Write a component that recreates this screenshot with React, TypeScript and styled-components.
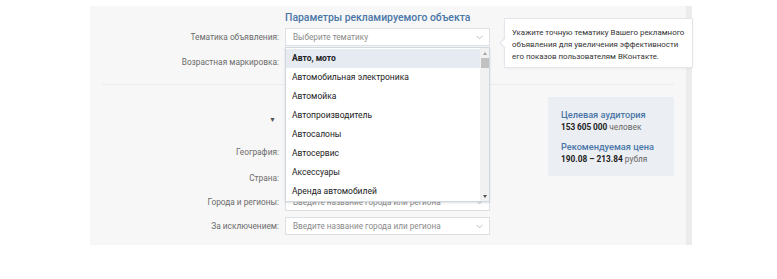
import React from 'react';
import styled, { createGlobalStyle } from 'styled-components';

const GlobalStyle = createGlobalStyle`
  body {
    margin: 0;
    background: #fff;
    font-family: Roboto, "Noto Sans", Arial, sans-serif;
  }
`;

const Page = styled.div`
  display: flex;
  padding: 6px 0 0 90px;
`;

const Panel = styled.div`
  position: relative;
  width: 596px;
  height: 239px;
  box-sizing: border-box;
  padding: 4px 12px 0;
  background: #f7f7f7;
  display: flex;
  flex-direction: column;
`;

const Strip = styled.div`
  width: 6px;
  height: 239px;
  background: #ececec;
`;

const Row = styled.div<{ $h?: number; $mt?: number }>`
  display: grid;
  grid-template-columns: 177px 205px;
  column-gap: 6px;
  align-items: center;
  height: ${(p) => p.$h ?? 18}px;
  margin-top: ${(p) => p.$mt ?? 0}px;
`;

const Label = styled.div`
  text-align: right;
  font-size: 8.3px;
  color: #6b6b6b;
  white-space: nowrap;
`;

const Title = styled.div`
  font-size: 10.4px;
  font-weight: 500;
  color: #4a76a8;
  white-space: nowrap;
`;

const SelectWrap = styled.div`
  position: relative;
  height: 18px;
`;

const Select = styled.div`
  box-sizing: border-box;
  height: 18px;
  padding: 0 6px 0 7px;
  display: flex;
  align-items: center;
  justify-content: space-between;
  background: #fff;
  border: 1px solid #dce1e6;
  font-size: 8.2px;
  color: #8a8a8a;
  white-space: nowrap;
`;

const Chevron = () => (
  <svg width="7" height="5" viewBox="0 0 7 5">
    <polyline points="0.5,0.8 3.5,3.8 6.5,0.8" fill="none" stroke="#b8c1cb" strokeWidth="1" />
  </svg>
);

const Dropdown = styled.div`
  position: absolute;
  z-index: 2;
  top: 19px;
  left: 0;
  width: 205px;
  height: 155px;
  box-sizing: border-box;
  display: flex;
  background: #fff;
  border: 1px solid #d0d7de;
  box-shadow: 0 1px 2px rgba(0, 0, 0, 0.12);
`;

const Items = styled.div`
  flex: 1;
  padding-top: 1px;
  overflow: hidden;
`;

const Item = styled.div<{ $active?: boolean }>`
  height: 19px;
  line-height: 18px;
  padding-left: 6px;
  font-size: 8.5px;
  color: #222;
  white-space: nowrap;
  background: ${(p) => (p.$active ? '#e5ebf1' : 'transparent')};
  font-weight: ${(p) => (p.$active ? 700 : 400)};
`;

const Scrollbar = styled.div`
  width: 9px;
  background: #f1f1f1;
  display: flex;
  flex-direction: column;
  align-items: center;
  padding: 4px 0 3px;
`;

const Arrow = styled.div<{ $down?: boolean }>`
  width: 0;
  height: 0;
  border-left: 2.5px solid transparent;
  border-right: 2.5px solid transparent;
  ${(p) => (p.$down ? 'border-top: 3px solid #505050;' : 'border-bottom: 3px solid #a3a3a3;')}
`;

const Thumb = styled.div`
  width: 8px;
  height: 10px;
  margin-top: 3px;
  background: #c1c1c1;
`;

const Spacer = styled.div`
  flex: 1;
`;

const Tooltip = styled.div`
  position: absolute;
  z-index: 3;
  left: 415px;
  top: 13px;
  width: 187px;
  box-sizing: border-box;
  padding: 8px 4px 4px 7px;
  background: #fff;
  box-shadow: 0 0 0 1px #e3e6ea, 0 1px 3px rgba(0, 0, 0, 0.08);
  font-size: 7.9px;
  line-height: 12px;
  color: #333;
  white-space: nowrap;

  &::before {
    content: '';
    position: absolute;
    left: -4px;
    top: 20px;
    width: 7px;
    height: 7px;
    background: #fff;
    border-left: 1px solid #dfe3e8;
    border-bottom: 1px solid #dfe3e8;
    transform: rotate(45deg);
  }
`;

const Separator = styled.div`
  height: 1px;
  margin-top: 13px;
  background: #ebebeb;
`;

const Lower = styled.div`
  display: flex;
  justify-content: space-between;
`;

const Form = styled.div`
  display: flex;
  flex-direction: column;
`;

const Toggle = styled.span`
  font-size: 7px;
  color: #555;
  margin-right: 3px;
`;

const Audience = styled.div`
  width: 126px;
  height: 79px;
  margin-top: 12px;
  box-sizing: border-box;
  padding: 11px 13px;
  background: #ebeef2;
`;

const StatTitle = styled.div<{ $mt?: number }>`
  font-size: 9.2px;
  font-weight: 500;
  line-height: 13px;
  color: #4a76a8;
  margin-top: ${(p) => p.$mt ?? 0}px;
  white-space: nowrap;
`;

const StatValue = styled.div`
  font-size: 8.3px;
  line-height: 13px;
  color: #666;
  white-space: nowrap;

  b {
    color: #222;
    font-weight: 700;
  }
`;

const topics = [
  'Авто, мото',
  'Автомобильная электроника',
  'Автомойка',
  'Автопроизводитель',
  'Автосалоны',
  'Автосервис',
  'Аксессуары',
  'Аренда автомобилей',
];

export default function App() {
  return (
    <>
      <GlobalStyle />
      <Page>
        <Panel>
          <Row $h={14}>
            <span />
            <Title>Параметры рекламируемого объекта</Title>
          </Row>
          <Row $mt={4}>
            <Label>Тематика объявления:</Label>
            <SelectWrap>
              <Select>
                Выберите тематику
                <Chevron />
              </Select>
              <Dropdown>
                <Items>
                  {topics.map((t, i) => (
                    <Item key={t} $active={i === 0}>
                      {t}
                    </Item>
                  ))}
                </Items>
                <Scrollbar>
                  <Arrow />
                  <Thumb />
                  <Spacer />
                  <Arrow $down />
                </Scrollbar>
              </Dropdown>
            </SelectWrap>
          </Row>
          <Row $mt={7}>
            <Label>Возрастная маркировка:</Label>
            <Select />
          </Row>

          <Separator />

          <Lower>
            <Form>
              <Row $mt={25}>
                <Label>
                  <Toggle>▼</Toggle>
                </Label>
                <span />
              </Row>
              <Row $mt={15}>
                <Label>География:</Label>
                <span />
              </Row>
              <Row $mt={8}>
                <Label>Страна:</Label>
                <Select />
              </Row>
              <Row $mt={6}>
                <Label>Города и регионы:</Label>
                <Select>
                  Введите название города или региона
                  <Chevron />
                </Select>
              </Row>
              <Row $mt={6}>
                <Label>За исключением:</Label>
                <Select>
                  Введите название города или региона
                  <Chevron />
                </Select>
              </Row>
            </Form>

            <Audience>
              <StatTitle>Целевая аудитория</StatTitle>
              <StatValue>
                <b>153&thinsp;605&thinsp;000</b> человек
              </StatValue>
              <StatTitle $mt={6}>Рекомендуемая цена</StatTitle>
              <StatValue>
                <b>190.08 – 213.84</b> рубля
              </StatValue>
            </Audience>
          </Lower>

          <Tooltip>
            Укажите точную тематику Вашего рекламного
            <br />
            объявления для увеличения эффективности
            <br />
            его показов пользователям ВКонтакте.
          </Tooltip>
        </Panel>
        <Strip />
      </Page>
    </>
  );
}
